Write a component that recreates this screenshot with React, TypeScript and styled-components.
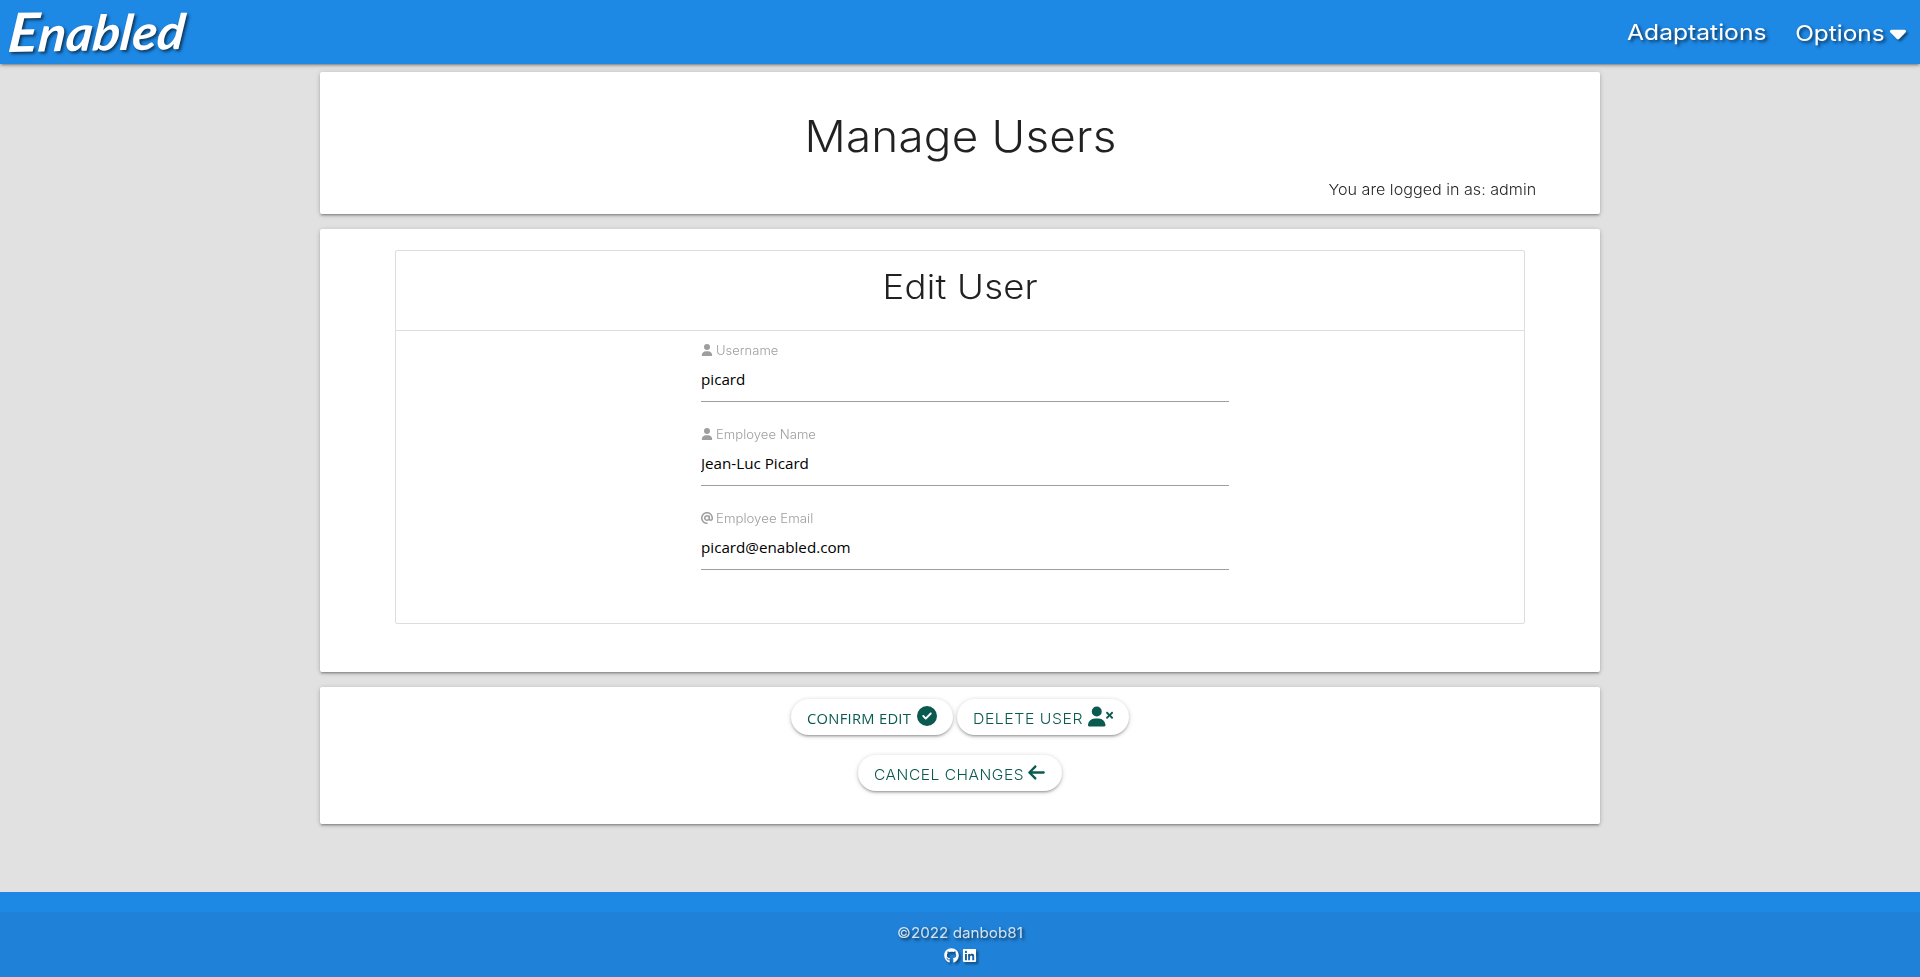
import React from 'react';
import styled, { createGlobalStyle } from 'styled-components';
import {
  FaArrowLeft,
  FaAt,
  FaCaretDown,
  FaCircleCheck,
  FaGithub,
  FaLinkedin,
  FaUser,
  FaUserXmark,
} from 'react-icons/fa6';

const GlobalStyle = createGlobalStyle`
  *, *::before, *::after { box-sizing: border-box; }
  body {
    margin: 0;
    background: #e1e1e1;
    color: rgba(0, 0, 0, 0.87);
    font-family: Inter, "Liberation Sans", sans-serif;
    font-weight: 300;
  }
`;

const depth = `
  box-shadow: 0 2px 2px 0 rgba(0, 0, 0, 0.14), 0 3px 1px -2px rgba(0, 0, 0, 0.12),
    0 1px 5px 0 rgba(0, 0, 0, 0.2);
`;

const Page = styled.div`
  display: flex;
  flex-direction: column;
  min-height: 977px;
`;

const Wide = styled.span<{ $scale: number; $origin?: string }>`
  display: inline-block;
  transform: scaleX(${(p) => p.$scale});
  transform-origin: ${(p) => p.$origin ?? 'left'};
`;

const Nav = styled.nav`
  display: flex;
  justify-content: space-between;
  height: 64px;
  padding: 0 14px 0 9px;
  background: #1e88e5;
  color: #fff;
  text-shadow: 2px 2px 3px rgba(0, 0, 0, 0.6);
  ${depth}
`;

const Logo = styled.a`
  font: italic 700 49px/63px Lato, sans-serif;
  transform: scaleX(1.04) skewX(-7deg) rotate(-1deg);
  transform-origin: left;
  &::first-letter { font-size: 54px; }
`;

const NavLinks = styled.div`
  display: flex;
  align-items: center;
  gap: 38px;
  font-size: 22px;
  font-weight: 400;
`;

const NavLink = styled.a`
  display: flex;
  align-items: center;
  gap: 5px;
  svg {
    width: 16px;
    height: 26px;
    filter: drop-shadow(2px 2px 1px rgba(0, 0, 0, 0.45));
  }
  &:last-child { padding-top: 2px; }
`;

const Main = styled.main`
  flex: 1;
  display: flex;
  flex-direction: column;
  gap: 15px;
  width: 1280px;
  margin: 0 auto;
  padding-top: 8px;
`;

const Card = styled.section<{ $height: number }>`
  display: flow-root;
  height: ${(p) => p.$height}px;
  border-radius: 2px;
  background: #fff;
  ${depth}
`;

const Title = styled.h1`
  margin: 0;
  padding-top: 37px;
  font-size: 43px;
  font-weight: 300;
  line-height: 54px;
  letter-spacing: 0.2px;
  text-align: center;
`;

const LoginNote = styled.p`
  margin: 16px 64px 0 0;
  font-size: 15px;
  line-height: 22px;
  text-align: right;
`;

const Panel = styled.div`
  width: 1130px;
  height: 374px;
  margin: 21px auto 0;
  border: 1px solid #ddd;
  border-radius: 2px;
`;

const PanelTitle = styled.h2`
  height: 80px;
  margin: 0;
  border-bottom: 1px solid #ddd;
  font-size: 33.5px;
  font-weight: 300;
  line-height: 72px;
  letter-spacing: 0.2px;
  text-align: center;
`;

const Field = styled.div`
  width: 528px;
  height: 84px;
  margin-left: 305px;
  padding-top: 10px;
`;

const Label = styled.label`
  display: flex;
  align-items: center;
  gap: 3px;
  height: 18px;
  margin-bottom: 1px;
  color: #9e9e9e;
  font-size: 12.5px;
  svg { margin: -1px 0 0 -0.5px; }
`;

const Input = styled.input`
  display: block;
  width: 100%;
  height: 42px;
  padding: 0 0 3px;
  border: 0;
  border-bottom: 1px solid #9e9e9e;
  outline: none;
  background: transparent;
  color: #000;
  font: 400 15.2px "Open Sans", sans-serif;
`;

const Actions = styled.div`
  display: flex;
  flex-direction: column;
  align-items: center;
  gap: 20px;
  padding-top: 12px;
`;

const ActionRow = styled.div`
  display: flex;
  gap: 4px;
`;

const Button = styled.button<{ $width: number; $plain?: boolean }>`
  display: flex;
  align-items: center;
  justify-content: space-between;
  width: ${(p) => p.$width}px;
  height: 36px;
  padding: 2px 16px 0;
  border: 0;
  border-radius: 18px;
  background: #fff;
  color: #0b5a50;
  font-family: ${(p) => (p.$plain ? '"Open Sans"' : 'Inter')}, sans-serif;
  font-size: ${(p) => (p.$plain ? 15 : 14.5)}px;
  font-weight: ${(p) => (p.$plain ? 400 : 300)};
  letter-spacing: ${(p) => (p.$plain ? 0.3 : 0.5)}px;
  white-space: nowrap;
  ${depth}
  svg { flex: none; margin-top: -4px; }
`;

const Footer = styled.footer`
  height: 85px;
  padding-top: 20px;
  background: #1e88e5;
`;

const Copyright = styled.div`
  display: flex;
  flex-direction: column;
  align-items: center;
  height: 65px;
  padding-top: 10px;
  background: rgba(51, 51, 51, 0.08);
  color: rgba(255, 255, 255, 0.8);
  font-size: 14.5px;
  font-weight: 400;
  line-height: 22px;
  text-shadow: 2px 2px 3px rgba(0, 0, 0, 0.6);
`;

const Social = styled.div`
  display: flex;
  align-items: center;
  gap: 3px;
  height: 22px;
  color: #fff;
  svg { filter: drop-shadow(2px 2px 1px rgba(0, 0, 0, 0.45)); }
`;

export default function App() {
  return (
    <>
      <GlobalStyle />
      <Page>
        <Nav>
          <Logo>Enabled</Logo>
          <NavLinks>
            <NavLink><Wide $scale={1.12} $origin="right">Adaptations</Wide></NavLink>
            <NavLink>
              <Wide $scale={1.11} $origin="right">Options</Wide>
              <FaCaretDown preserveAspectRatio="none" />
            </NavLink>
          </NavLinks>
        </Nav>
        <Main>
          <Card $height={142}>
            <Title><Wide $scale={1.065} $origin="center">Manage Users</Wide></Title>
            <LoginNote><Wide $scale={1.075} $origin="right">You are logged in as: admin</Wide></LoginNote>
          </Card>
          <Card $height={443}>
            <Panel>
              <PanelTitle><Wide $scale={1.09} $origin="center">Edit User</Wide></PanelTitle>
              <Field>
                <Label><FaUser size={12} /><Wide $scale={1.04}>Username</Wide></Label>
                <Input defaultValue="picard" />
              </Field>
              <Field>
                <Label><FaUser size={12} /><Wide $scale={1.05}>Employee Name</Wide></Label>
                <Input defaultValue="Jean-Luc Picard" />
              </Field>
              <Field>
                <Label><FaAt size={12} /><Wide $scale={1.06}>Employee Email</Wide></Label>
                <Input defaultValue="picard@enabled.com" />
              </Field>
            </Panel>
          </Card>
          <Card $height={137}>
            <Actions>
              <ActionRow>
                <Button $width={162} $plain>
                  <Wide $scale={0.98}>CONFIRM EDIT</Wide>
                  <FaCircleCheck size={20} />
                </Button>
                <Button $width={172}>
                  <Wide $scale={1.09}>DELETE USER</Wide>
                  <FaUserXmark size={25} />
                </Button>
              </ActionRow>
              <Button $width={204}>
                <Wide $scale={1.07}>CANCEL CHANGES</Wide>
                <FaArrowLeft size={19} />
              </Button>
            </Actions>
          </Card>
        </Main>
        <Footer>
          <Copyright>
            <Wide $scale={1.05} $origin="center">©2022 danbob81</Wide>
            <Social><FaGithub size={15} /><FaLinkedin size={15} /></Social>
          </Copyright>
        </Footer>
      </Page>
    </>
  );
}
